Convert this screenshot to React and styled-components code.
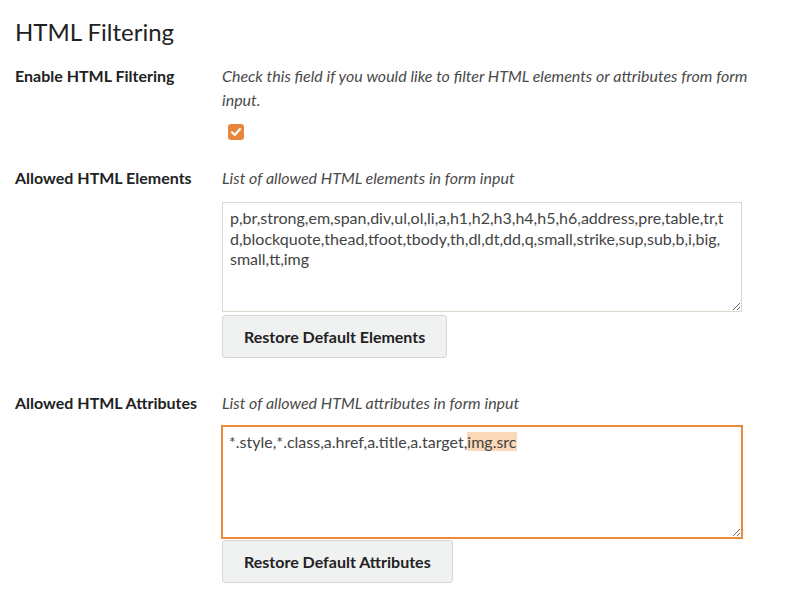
import React from "react";
import styled, { createGlobalStyle } from "styled-components";

const GlobalStyle = createGlobalStyle`
  body {
    margin: 0;
    background: #fff;
    font-family: Lato, "Open Sans", sans-serif;
    color: #222;
  }
`;

const App = () => {
  return (
    <Page>
      <GlobalStyle />
      <Title>HTML Filtering</Title>

      <Row gap="26px">
        <Label>Enable HTML Filtering</Label>
        <Field>
          <Help>Check this field if you would like to filter HTML elements or attributes from form input.</Help>
          <Checkbox>
            <svg width="12" height="12" viewBox="0 0 12 12">
              <path d="M2 6.3 L4.8 9 L10 3" fill="none" stroke="#fff" strokeWidth="2.2" strokeLinecap="round" strokeLinejoin="round" />
            </svg>
          </Checkbox>
        </Field>
      </Row>

      <Row gap="33px">
        <Label>Allowed HTML Elements</Label>
        <Field>
          <Help>List of allowed HTML elements in form input</Help>
          <TextBox>
            <TextInner>
              p,br,strong,em,span,div,ul,ol,li,a,h1,h2,h3,h4,h5,h6,address,pre,table,tr,td,blockquote,thead,tfoot,tbody,th,dl,dt,dd,q,small,strike,sup,sub,b,i,big,small,tt,img
            </TextInner>
          </TextBox>
          <RestoreButton>Restore Default Elements</RestoreButton>
        </Field>
      </Row>

      <Row gap="20px">
        <Label>Allowed HTML Attributes</Label>
        <Field>
          <Help>List of allowed HTML attributes in form input</Help>
          <TextBox focused>
            <TextInner>
              *.style,*.class,a.href,a.title,a.target,<Mark>img.src</Mark>
            </TextInner>
          </TextBox>
          <RestoreButton tight>Restore Default Attributes</RestoreButton>
        </Field>
      </Row>
    </Page>
  );
};

const Page = styled.div`
  padding: 14px 15px 20px;
`;

const Title = styled.h1`
  margin: 0 0 14px;
  font-size: 24px;
  font-weight: 400;
  line-height: 36px;
  color: #222;
`;

const Row = styled.div`
  display: grid;
  grid-template-columns: 207px 560px;
  margin-bottom: ${(p) => p.gap};
`;

const Label = styled.div`
  font-size: 16px;
  font-weight: 700;
  line-height: 24px;
  color: #222;
`;

const Field = styled.div`
  display: flex;
  flex-direction: column;
  align-items: flex-start;
`;

const Help = styled.p`
  margin: 0;
  font-size: 16px;
  font-style: italic;
  line-height: 24px;
  color: #4a4a4a;
`;

const Checkbox = styled.span`
  display: flex;
  align-items: center;
  justify-content: center;
  width: 16px;
  height: 16px;
  margin: 12px 0 0 6px;
  border-radius: 3px;
  background: #e8863b;
`;

const TextBox = styled.div`
  box-sizing: border-box;
  width: ${(p) => (p.focused ? "522px" : "520px")};
  height: ${(p) => (p.focused ? "114px" : "110px")};
  margin: ${(p) => (p.focused ? "10px 0 0 -1px" : "12px 0 0")};
  padding: ${(p) => (p.focused ? "5px 6px" : "5px 7px")};
  border: ${(p) => (p.focused ? "2px solid #ec8a3a" : "1px solid #d9dacb")};
  font-size: 16px;
  line-height: 20.5px;
  color: #444;
  overflow: auto;
  resize: both;
  background: #fff;
`;

const TextInner = styled.div`
  width: 496px;
  word-break: break-all;
`;

const Mark = styled.span`
  background: #fbd9b8;
`;

const RestoreButton = styled.button`
  margin-top: ${(p) => (p.tight ? "1px" : "3px")};
  padding: 11px 21px;
  background: #f0f1f1;
  border: 1px solid #d7d8cf;
  border-radius: 3px;
  font-family: Lato, sans-serif;
  font-size: 16px;
  font-weight: 700;
  color: #222;
  line-height: 19px;
  cursor: pointer;
`;

export default App;
